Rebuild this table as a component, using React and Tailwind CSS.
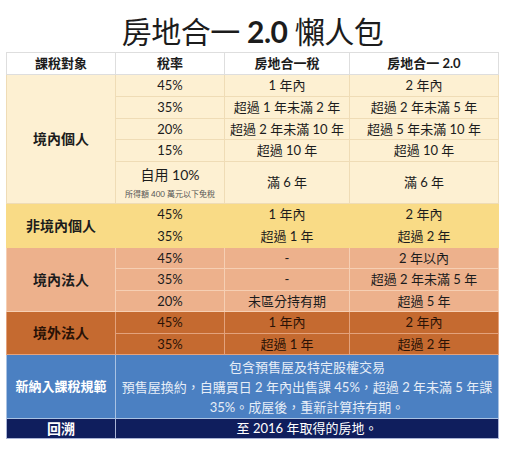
const font = { fontFamily: 'Lato, "Noto Sans CJK TC", sans-serif' };

const Cell = ({ className = '', children, ...rest }) => (
    <td className={`text-center align-middle p-0 ${className}`} {...rest}>
        {children}
    </td>
);

export default function App() {
    // 顏色區塊
    const cream = 'bg-[#fdf0d2] border border-[#efdcb6]';
    const yellow = 'bg-[#f9db86] border border-[#f9db86]';
    const salmon = 'bg-[#edb18c] border border-[#f6cfb3]';
    const brown = 'bg-[#c56a30] border border-[#e3a27c]';
    const blue = 'bg-[#4b80c2] border border-[#a9c2e3]';
    const navy = 'bg-[#0f1e5d] border border-[#a9b4d6]';

    return (
        <div className="w-[505px] h-[450px] bg-white text-[#1c1c1c]" style={font}>
            <div className="pt-[11px] h-[52px] text-center text-[30px] leading-[40px] tracking-[-0.5px]">
                房地合一 <span className="font-bold">2.0</span> 懶人包
            </div>

            <table className="ml-[6px] w-[492px] table-fixed border-collapse text-[13px] leading-none">
                <colgroup>
                    <col className="w-[109px]" />
                    <col className="w-[109px]" />
                    <col className="w-[125px]" />
                    <col className="w-[149px]" />
                </colgroup>
                <tbody>
                    <tr className="h-[22px] font-bold bg-white">
                        <Cell className="border border-[#dedede]">課稅對象</Cell>
                        <Cell className="border border-[#dedede]">稅率</Cell>
                        <Cell className="border border-[#dedede]">房地合一稅</Cell>
                        <Cell className="border border-[#dedede]">房地合一 2.0</Cell>
                    </tr>

                    {/* 境內個人 */}
                    <tr className="h-[22px]">
                        <Cell rowSpan={5} className={`${cream} font-bold text-[14px]`}>境內個人</Cell>
                        <Cell className={cream}>45%</Cell>
                        <Cell className={cream}>1 年內</Cell>
                        <Cell className={cream}>2 年內</Cell>
                    </tr>
                    <tr className="h-[22px]">
                        <Cell className={cream}>35%</Cell>
                        <Cell className={cream}>超過 1 年未滿 2 年</Cell>
                        <Cell className={cream}>超過 2 年未滿 5 年</Cell>
                    </tr>
                    <tr className="h-[21px]">
                        <Cell className={cream}>20%</Cell>
                        <Cell className={cream}>超過 2 年未滿 10 年</Cell>
                        <Cell className={cream}>超過 5 年未滿 10 年</Cell>
                    </tr>
                    <tr className="h-[22px]">
                        <Cell className={cream}>15%</Cell>
                        <Cell className={cream}>超過 10 年</Cell>
                        <Cell className={cream}>超過 10 年</Cell>
                    </tr>
                    <tr className="h-[42px]">
                        <Cell className={cream}>
                            <div className="text-[14px]">自用 10%</div>
                            <div className="mt-[8px] text-[8px] text-[#555]">所得額 400 萬元以下免稅</div>
                        </Cell>
                        <Cell className={cream}>滿 6 年</Cell>
                        <Cell className={cream}>滿 6 年</Cell>
                    </tr>

                    {/* 非境內個人 */}
                    <tr className="h-[22px]">
                        <Cell rowSpan={2} className={`${yellow} font-bold text-[14px]`}>非境內個人</Cell>
                        <Cell className={yellow}>45%</Cell>
                        <Cell className={yellow}>1 年內</Cell>
                        <Cell className={yellow}>2 年內</Cell>
                    </tr>
                    <tr className="h-[22px]">
                        <Cell className={yellow}>35%</Cell>
                        <Cell className={yellow}>超過 1 年</Cell>
                        <Cell className={yellow}>超過 2 年</Cell>
                    </tr>

                    {/* 境內法人 */}
                    <tr className="h-[21px]">
                        <Cell rowSpan={3} className={`${salmon} font-bold text-[14px]`}>境內法人</Cell>
                        <Cell className={salmon}>45%</Cell>
                        <Cell className={salmon}>-</Cell>
                        <Cell className={salmon}>2 年以內</Cell>
                    </tr>
                    <tr className="h-[22px]">
                        <Cell className={salmon}>35%</Cell>
                        <Cell className={salmon}>-</Cell>
                        <Cell className={salmon}>超過 2 年未滿 5 年</Cell>
                    </tr>
                    <tr className="h-[21px]">
                        <Cell className={salmon}>20%</Cell>
                        <Cell className={salmon}>未區分持有期</Cell>
                        <Cell className={salmon}>超過 5 年</Cell>
                    </tr>

                    {/* 境外法人 */}
                    <tr className="h-[22px] text-[#2a1206]">
                        <Cell rowSpan={2} className={`${brown} font-bold text-[14px]`}>境外法人</Cell>
                        <Cell className={brown}>45%</Cell>
                        <Cell className={brown}>1 年內</Cell>
                        <Cell className={brown}>2 年內</Cell>
                    </tr>
                    <tr className="h-[21px] text-[#2a1206]">
                        <Cell className={brown}>35%</Cell>
                        <Cell className={brown}>超過 1 年</Cell>
                        <Cell className={brown}>超過 2 年</Cell>
                    </tr>

                    {/* 新納入課稅規範 */}
                    <tr className="h-[64px] text-[#e6edf7]">
                        <Cell className={`${blue} font-bold text-white`}>新納入課稅規範</Cell>
                        <Cell colSpan={3} className={`${blue} leading-[20px] px-[4px]`}>
                            <div>包含預售屋及特定股權交易</div>
                            <div>預售屋換約，自購買日 2 年內出售課 45%，超過 2 年未滿 5 年課 35%。成屋後，重新計算持有期。</div>
                        </Cell>
                    </tr>

                    {/* 回溯 */}
                    <tr className="h-[20px] text-white">
                        <Cell className={`${navy} font-bold text-[14px]`}>回溯</Cell>
                        <Cell colSpan={3} className={navy}>至 2016 年取得的房地。</Cell>
                    </tr>
                </tbody>
            </table>
        </div>
    );
}
